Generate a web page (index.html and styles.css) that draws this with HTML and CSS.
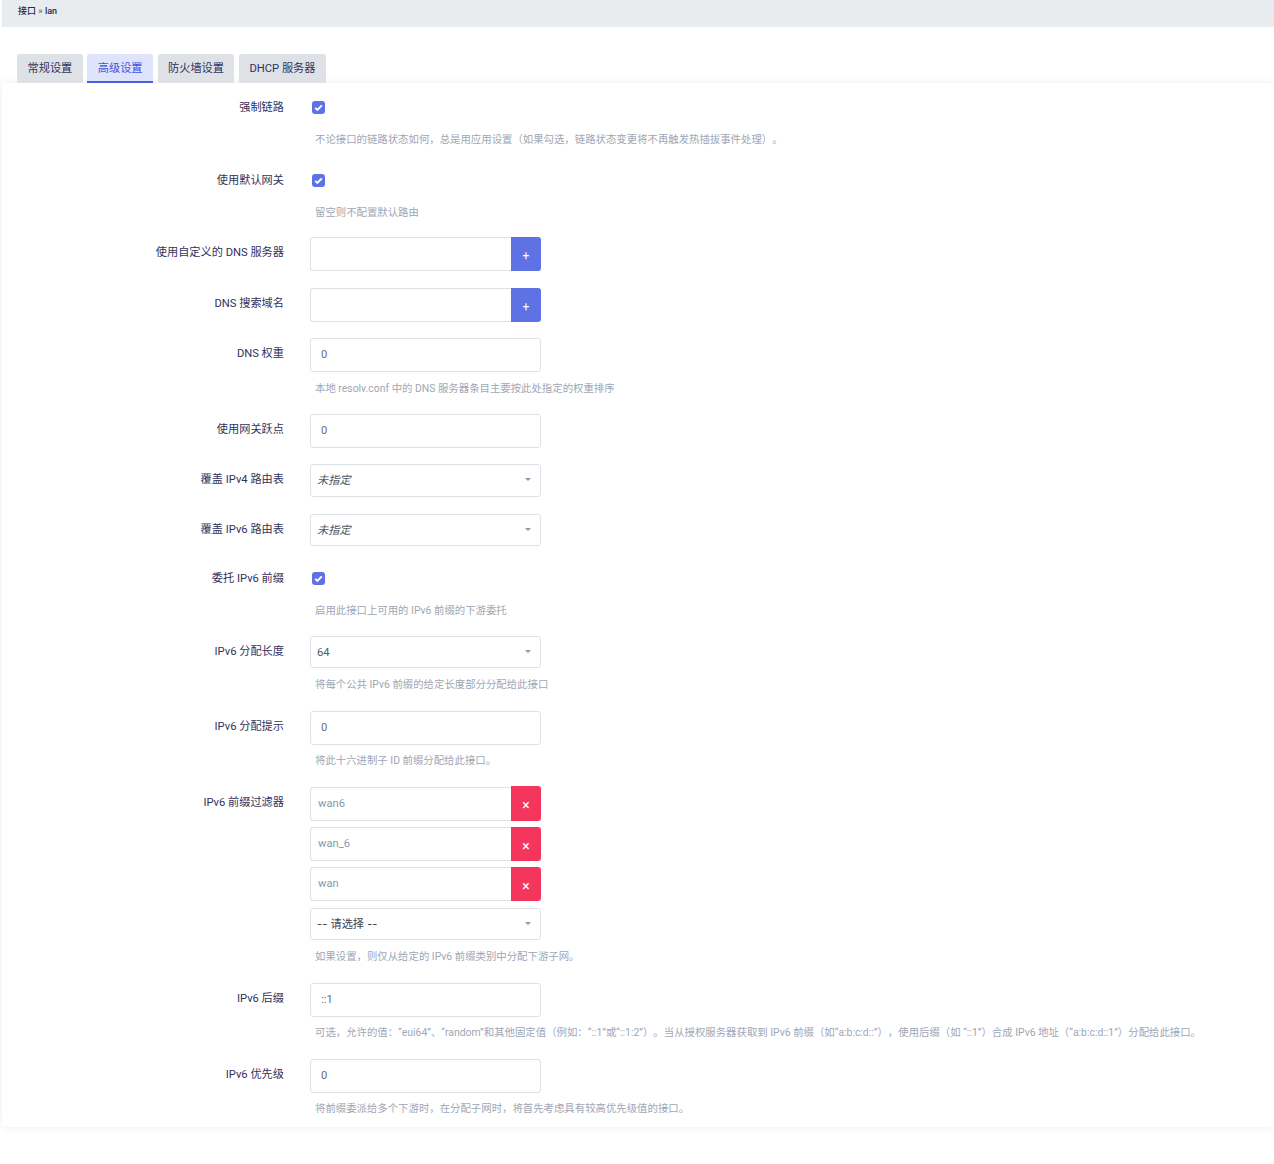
FILE: index.html
```html
<!DOCTYPE html>
<html lang="zh-CN">
<head>
<meta charset="utf-8">
<title>接口 » lan</title>
<link rel="stylesheet" href="styles.css">
</head>
<body>
<header class="crumb"><a class="crumb-link">接口</a> <span class="crumb-sep">»</span> <span class="crumb-link">lan</span></header>
<nav class="tabs">
  <a class="tab">常规设置</a>
  <a class="tab tab-active">高级设置</a>
  <a class="tab">防火墙设置</a>
  <a class="tab">DHCP 服务器</a>
</nav>
<main class="card">
  <div class="row row-check">
    <label class="lbl">强制链路</label>
    <div class="fld"><span class="check"><svg viewBox="0 0 13 13" width="13" height="13"><path d="M3.2 6.8 5.4 9 9.8 4.3" fill="none" stroke="#fff" stroke-width="1.9"/></svg></span>
      <p class="help">不论接口的链路状态如何，总是用应用设置（如果勾选，链路状态变更将不再触发热插拔事件处理）。</p></div>
  </div>
  <div class="row row-check row-tight">
    <label class="lbl">使用默认网关</label>
    <div class="fld"><span class="check"><svg viewBox="0 0 13 13" width="13" height="13"><path d="M3.2 6.8 5.4 9 9.8 4.3" fill="none" stroke="#fff" stroke-width="1.9"/></svg></span>
      <p class="help">留空则不配置默认路由</p></div>
  </div>
  <div class="row row-dns">
    <label class="lbl">使用自定义的 DNS 服务器</label>
    <div class="fld"><div class="dyn"><input class="inp inp-join"><button class="btn btn-add">+</button></div></div>
  </div>
  <div class="row">
    <label class="lbl">DNS 搜索域名</label>
    <div class="fld"><div class="dyn"><input class="inp inp-join"><button class="btn btn-add">+</button></div></div>
  </div>
  <div class="row">
    <label class="lbl">DNS 权重</label>
    <div class="fld"><input class="inp" value="0">
      <p class="help">本地 resolv.conf 中的 DNS 服务器条目主要按此处指定的权重排序</p></div>
  </div>
  <div class="row">
    <label class="lbl">使用网关跃点</label>
    <div class="fld"><input class="inp" value="0"></div>
  </div>
  <div class="row row-sel">
    <label class="lbl">覆盖 IPv4 路由表</label>
    <div class="fld"><div class="sel"><select class="sel-box sel-unset sel-tall"><option>未指定</option></select></div></div>
  </div>
  <div class="row">
    <label class="lbl">覆盖 IPv6 路由表</label>
    <div class="fld"><div class="sel"><select class="sel-box sel-unset"><option>未指定</option></select></div></div>
  </div>
  <div class="row row-check">
    <label class="lbl">委托 IPv6 前缀</label>
    <div class="fld"><span class="check"><svg viewBox="0 0 13 13" width="13" height="13"><path d="M3.2 6.8 5.4 9 9.8 4.3" fill="none" stroke="#fff" stroke-width="1.9"/></svg></span>
      <p class="help">启用此接口上可用的 IPv6 前缀的下游委托</p></div>
  </div>
  <div class="row">
    <label class="lbl">IPv6 分配长度</label>
    <div class="fld"><div class="sel"><select class="sel-box"><option>64</option></select></div>
      <p class="help help-sel">将每个公共 IPv6 前缀的给定长度部分分配给此接口</p></div>
  </div>
  <div class="row">
    <label class="lbl">IPv6 分配提示</label>
    <div class="fld"><input class="inp" value="0">
      <p class="help help-tight">将此十六进制子 ID 前缀分配给此接口。</p></div>
  </div>
  <div class="row">
    <label class="lbl">IPv6 前缀过滤器</label>
    <div class="fld">
      <div class="dyn dyn-item"><input class="inp inp-join inp-ro" value="wan6"><button class="btn btn-del">×</button></div>
      <div class="dyn dyn-item"><input class="inp inp-join inp-ro" value="wan_6"><button class="btn btn-del">×</button></div>
      <div class="dyn dyn-item dyn-end"><input class="inp inp-join inp-ro" value="wan"><button class="btn btn-del">×</button></div>
      <div class="sel"><select class="sel-box sel-cjk"><option>-- 请选择 --</option></select></div>
      <p class="help help-sel">如果设置，则仅从给定的 IPv6 前缀类别中分配下游子网。</p>
    </div>
  </div>
  <div class="row">
    <label class="lbl">IPv6 后缀</label>
    <div class="fld"><input class="inp" value="::1">
      <p class="help help-tight">可选，允许的值：“eui64”、“random”和其他固定值（例如：“::1”或“::1:2”）。当从授权服务器获取到 IPv6 前缀（如“a:b:c:d::”），使用后缀（如 “::1”）合成 IPv6 地址（“a:b:c:d::1”）分配给此接口。</p></div>
  </div>
  <div class="row row-last">
    <label class="lbl">IPv6 优先级</label>
    <div class="fld"><input class="inp" value="0">
      <p class="help help-tight">将前缀委派给多个下游时，在分配子网时，将首先考虑具有较高优先级值的接口。</p></div>
  </div>
</main>
</body>
</html>
```
FILE: styles.css
```css
* { box-sizing: border-box; }
html, body { margin: 0; padding: 0; }
body {
  background: #fff;
  font-family: Roboto, "Noto Sans CJK SC", sans-serif;
  font-size: 11.2px;
  color: #32325d;
  padding-left: 2px;
  height: 1164px;
  overflow: hidden;
  text-spacing-trim: space-all;
}
.crumb {
  height: 27px;
  background: #e9ecef;
  padding: 5px 0 0 16px;
  font-size: 9px;
  line-height: 12px;
  font-weight: 500;
  color: #172b4d;
}
.crumb-sep { color: #525f7f; }
.tabs {
  display: flex;
  gap: 4.5px;
  margin-top: 27px;
  padding-left: 15px;
  height: 29px;
}
.tab {
  display: block;
  height: 29px;
  padding: 7px 10.5px 0;
  background: #dee2e6;
  border-radius: 3px 3px 0 0;
  font-size: 11.2px;
  line-height: 15px;
  color: #32325d;
}
.tab-active {
  background: #dfe3fb;
  color: #3d55df;
  border-bottom: 2px solid #4a60e0;
}
.card {
  background: #fff;
  border-radius: 3px;
  box-shadow: 0 0 8px rgba(136,152,170,.16);
  padding: 9px 0 8px;
  height: 1044px;
}
.row {
  display: flex;
  margin-bottom: 16px;
}
.row-tight { margin-bottom: 15px; }
.row-dns { margin-bottom: 17px; }
.row-last { margin-bottom: 0; }
.row-sel { margin-bottom: 17px; }
.lbl {
  width: 282px;
  flex: none;
  text-align: right;
  font-size: 11.2px;
  line-height: 15px;
  padding-top: 8px;
  color: #32325d;
}
.fld {
  margin-left: 26px;
  width: 900px;
}
.row-check .fld { padding-top: 9px; }
.check {
  display: block;
  width: 13px;
  height: 13px;
  margin-left: 2px;
  border-radius: 3px;
  background: #5e72e4;
}
.check svg { display: block; }
.help {
  margin: 0;
  padding: 9px 0 0 5px;
  font-size: 10.4px;
  line-height: 16px;
  height: 26px;
  color: #a0a6b4;
  white-space: nowrap;
}
.help-sel { padding-top: 8px; }
.help-tight { padding-top: 8px; }
.row-check .help { height: 35px; padding-top: 18px; }
.inp {
  display: block;
  width: 231px;
  height: 34px;
  padding: 0 10px 2px;
  border: 1px solid #dee2e6;
  border-radius: 3px;
  background: #fff;
  font: inherit;
  color: #666c78;
  outline: none;
}
.inp-join {
  width: 201px;
  border-right: 0;
  border-radius: 3px 0 0 3px;
}
.inp-ro { padding: 0 7px 2px; color: #8898aa; }
.dyn { display: flex; width: 231px; }
.dyn-item { margin-bottom: 6px; }
.dyn-end { margin-bottom: 7px; }
.btn {
  width: 30px;
  height: 34px;
  padding: 3px 0 0;
  border: 0;
  border-radius: 0 3px 3px 0;
  color: #fff;
  font-family: inherit;
  font-size: 12px;
  line-height: 1;
  font-weight: 400;
}
.btn-add { background: #5e72e4; }
.btn-del {
  background: #f5365c;
  font-size: 14px;
}
.dyn-item:first-child .btn-del {
  height: 35px;
  margin-top: -1px;
}
.sel {
  position: relative;
  width: 231px;
  height: 33px;
}
.sel::after {
  content: "";
  position: absolute;
  top: 14px;
  right: 10px;
  border-style: solid;
  border-width: 3px 3px 0;
  border-color: #8898aa transparent transparent;
}
.sel-box {
  display: block;
  width: 100%;
  height: 32px;
  padding: 0 6px;
  border: 1px solid #dee2e6;
  border-radius: 3px;
  background: #fff;
  font: inherit;
  color: #525866;
  appearance: none;
  outline: none;
}
.sel-tall { height: 33px; }
.sel-unset { font-style: italic; }
.sel-cjk { color: #3c4150; font-family: Inter, "Noto Sans CJK SC", sans-serif; }
```
